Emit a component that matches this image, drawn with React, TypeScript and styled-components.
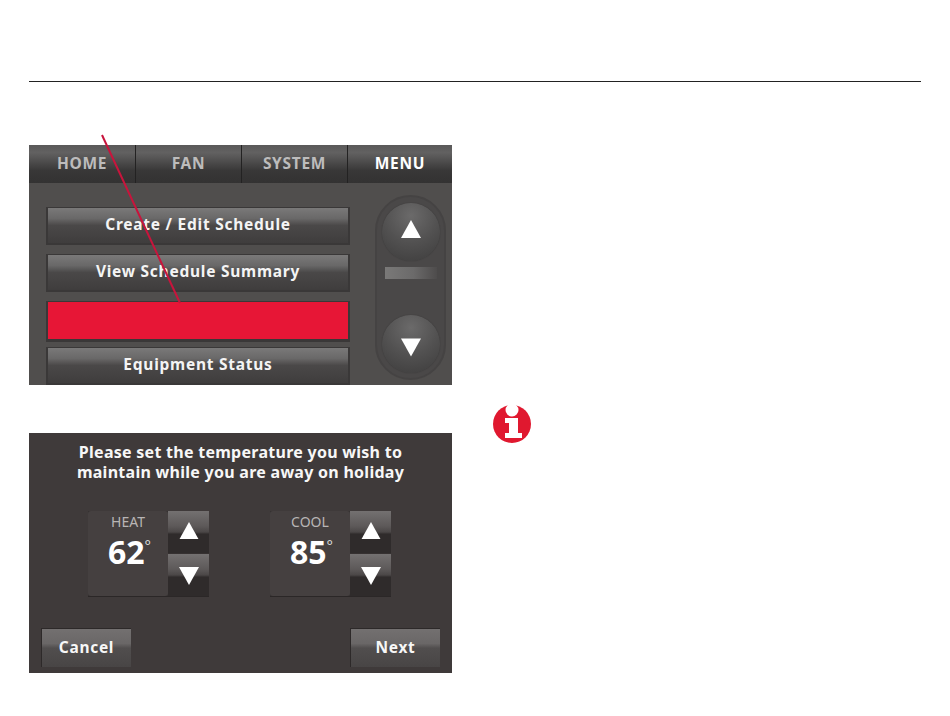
import React from "react";
import styled, { createGlobalStyle } from "styled-components";

const Global = createGlobalStyle`
  html, body { margin: 0; padding: 0; background: #fff; }
  body { font-family: "Noto Sans", "Liberation Sans", sans-serif; }
`;

const Page = styled.div`
  position: relative;
  width: 950px;
  height: 716px;
  padding: 81px 29px 0;
  box-sizing: border-box;
  overflow: hidden;
`;
const Rule = styled.hr`
  margin: 0;
  border: 0;
  height: 1px;
  width: 892px;
  background: #222;
`;
const Columns = styled.div`
  display: flex;
  gap: 40px;
  margin-top: 63px;
`;
const Figures = styled.div`
  display: flex;
  flex-direction: column;
  gap: 48px;
  width: 423px;
`;
const MenuScreen = styled.section`
  height: 240px;
  background: #504e4d;
  overflow: hidden;
`;
const TabBar = styled.nav`
  display: grid;
  grid-template-columns: 107px 106px 106px 104px;
  height: 38px;
`;
const Tab = styled.div<{ $active?: boolean }>`
  display: flex;
  align-items: center;
  justify-content: center;
  box-sizing: border-box;
  border-right: 1px solid #232222;
  background: linear-gradient(#5a5959 0, #626161 20%, #4f4e4e 42%, #383737 68%, #333232 100%);
  color: ${(p) => (p.$active ? "#fff" : "#bdbcbc")};
  font-size: 15.5px;
  font-weight: 700;
  letter-spacing: 0.7px;
  padding-bottom: 3px;
  &:last-child { border-right: 0; }
`;
const MenuBody = styled.div`
  display: flex;
  padding: 12px 0 0 17px;
`;
const MenuList = styled.div`
  display: flex;
  flex-direction: column;
  width: 304px;
  padding-top: 12px;
`;
const MenuButton = styled.div`
  display: flex;
  align-items: center;
  justify-content: center;
  box-sizing: border-box;
  height: 38px;
  margin-bottom: 9px;
  padding-bottom: 4px;
  border: 1px solid #3a3838;
  border-width: 1px 2px 2px;
  background: linear-gradient(#7a7979 0, #696868 30%, #4a4848 50%, #3f3d3d 100%);
  color: #f4f4f4;
  font-size: 15.5px;
  font-weight: 700;
  letter-spacing: 0.75px;
`;
const RedButton = styled.div`
  box-sizing: border-box;
  height: 41px;
  margin-bottom: 5px;
  border: 2px solid #3a3838;
  border-top-width: 1px;
  border-bottom-width: 3px;
  background: #e71636;
`;
const ScrollPill = styled.div`
  display: flex;
  flex-direction: column;
  align-items: center;
  box-sizing: border-box;
  width: 71px;
  height: 185px;
  margin-left: 25px;
  padding: 6px 0 5px;
  border-radius: 36px;
  border: 2px solid #454343;
  background: #4a4848;
`;
const RoundButton = styled.div<{ $bottom?: boolean }>`
  display: flex;
  align-items: center;
  justify-content: center;
  width: 58px;
  height: 58px;
  flex: none;
  margin-top: ${(p) => (p.$bottom ? "auto" : "0")};
  padding: ${(p) => (p.$bottom ? "6px 0 0" : "0 0 6px")};
  box-sizing: border-box;
  border-radius: 50%;
  background: radial-gradient(circle at 50% 22%, #6b6a6a 0, #525151 50%, #3d3c3c 100%);
  box-shadow: 0 0 1px #2e2d2d;
`;
const ScrollBar = styled.div`
  width: 52px;
  height: 12px;
  flex: none;
  margin-top: 6px;
  background: linear-gradient(90deg, #7a7978 0, #6b6a6a 55%, #4e4c4c 100%);
`;
const Triangle = styled.svg`
  display: block;
  flex: none;
`;
const Leader = styled.svg`
  position: absolute;
  left: 0;
  top: 0;
  pointer-events: none;
`;

const HolidayScreen = styled.section`
  display: flex;
  flex-direction: column;
  height: 240px;
  box-sizing: border-box;
  padding-top: 9px;
  background: #3f3a3a;
`;
const Prompt = styled.h2`
  margin: 0;
  color: #f7f7f7;
  font-size: 16px;
  line-height: 20px;
  font-weight: 700;
  letter-spacing: 0.27px;
  text-align: center;
`;
const Setters = styled.div`
  display: flex;
  gap: 61px;
  margin: 29px 0 0 59px;
`;
const Setter = styled.div`
  display: flex;
  width: 121px;
  height: 86px;
  box-sizing: border-box;
  background: #363131;
  border-bottom: 1px solid #2b2727;
`;
const Reading = styled.div`
  display: flex;
  flex-direction: column;
  align-items: center;
  width: 80px;
  padding-top: 2px;
  box-sizing: border-box;
  border-radius: 3px;
  background: #454040;
`;
const ModeLabel = styled.div`
  color: #b8b5b5;
  font-size: 14px;
  line-height: 18px;
`;
const Temperature = styled.div`
  display: flex;
  align-items: flex-start;
  color: #fff;
  font-size: 32px;
  line-height: 36px;
  font-weight: 700;
  margin: 3px 0 0 3px;
`;
const Degree = styled.span`
  font-size: 15px;
  line-height: 22px;
  font-weight: 400;
  color: #ddd;
`;
const Steppers = styled.div`
  display: flex;
  flex-direction: column;
  gap: 1px;
  width: 41px;
`;
const Stepper = styled.div<{ $down?: boolean }>`
  display: flex;
  align-items: ${(p) => (p.$down ? "flex-start" : "flex-end")};
  justify-content: center;
  height: 42px;
  box-sizing: border-box;
  padding: ${(p) => (p.$down ? "13px 0 0" : "0 0 14px")};
  background: linear-gradient(#747171 0, #5d5959 36%, #4b4747 50%, #2f2b2b 55%, #2f2b2b 100%);
`;
const Actions = styled.div`
  display: flex;
  justify-content: space-between;
  margin: 31px 12px 0;
`;
const ActionButton = styled.div`
  display: flex;
  align-items: center;
  justify-content: center;
  box-sizing: border-box;
  width: 90px;
  height: 39px;
  padding-bottom: 3px;
  border-left: 1px solid #2d2929;
  border-top: 1px solid #2d2929;
  background: linear-gradient(#737070 0, #6a6767 38%, #514e4e 50%, #484545 100%);
  color: #f7f7f7;
  font-size: 15.5px;
  font-weight: 700;
  letter-spacing: 0.7px;
`;
const Notes = styled.aside`
  padding-top: 258px;
`;
const InfoIcon = styled.svg`
  display: block;
`;

const Up = ({ w, h }: { w: number; h: number }) => (
  <Triangle width={w} height={h} viewBox="0 0 20 18"><polygon points="10,0 20,18 0,18" fill="#fff" /></Triangle>
);
const Down = ({ w, h }: { w: number; h: number }) => (
  <Triangle width={w} height={h} viewBox="0 0 20 18"><polygon points="0,0 20,0 10,18" fill="#fff" /></Triangle>
);

const TempSetter = ({ label, value }: { label: string; value: number }) => (
  <Setter>
    <Reading>
      <ModeLabel>{label}</ModeLabel>
      <Temperature>{value}<Degree>°</Degree></Temperature>
    </Reading>
    <Steppers>
      <Stepper><Up w={20} h={17} /></Stepper>
      <Stepper $down><Down w={20} h={18} /></Stepper>
    </Steppers>
  </Setter>
);

export default function App() {
  return (
    <Page>
      <Global />
      <Rule />
      <Columns>
        <Figures>
          <MenuScreen>
            <TabBar>
              <Tab>HOME</Tab>
              <Tab>FAN</Tab>
              <Tab>SYSTEM</Tab>
              <Tab $active>MENU</Tab>
            </TabBar>
            <MenuBody>
              <MenuList>
                <MenuButton>Create / Edit Schedule</MenuButton>
                <MenuButton>View Schedule Summary</MenuButton>
                <RedButton />
                <MenuButton>Equipment Status</MenuButton>
              </MenuList>
              <ScrollPill>
                <RoundButton><Up w={20} h={18} /></RoundButton>
                <ScrollBar />
                <RoundButton $bottom><Down w={20} h={19} /></RoundButton>
              </ScrollPill>
            </MenuBody>
          </MenuScreen>
          <HolidayScreen>
            <Prompt>Please set the temperature you wish to<br />maintain while you are away on holiday</Prompt>
            <Setters>
              <TempSetter label="HEAT" value={62} />
              <TempSetter label="COOL" value={85} />
            </Setters>
            <Actions>
              <ActionButton>Cancel</ActionButton>
              <ActionButton>Next</ActionButton>
            </Actions>
          </HolidayScreen>
        </Figures>
        <Notes>
          <InfoIcon width="40" height="40" viewBox="0 0 40 40">
            <circle cx="20" cy="21" r="19" fill="#e0182f" />
            <circle cx="20" cy="7" r="6.5" fill="#fff" />
            <path d="M13 15H26V30H30V35H13V30H17V20H13Z" fill="#fff" />
          </InfoIcon>
        </Notes>
      </Columns>
      <Leader width="950" height="716" viewBox="0 0 950 716">
        <line x1="102" y1="135" x2="180" y2="303" stroke="#c8143c" strokeWidth="2" />
      </Leader>
    </Page>
  );
}
